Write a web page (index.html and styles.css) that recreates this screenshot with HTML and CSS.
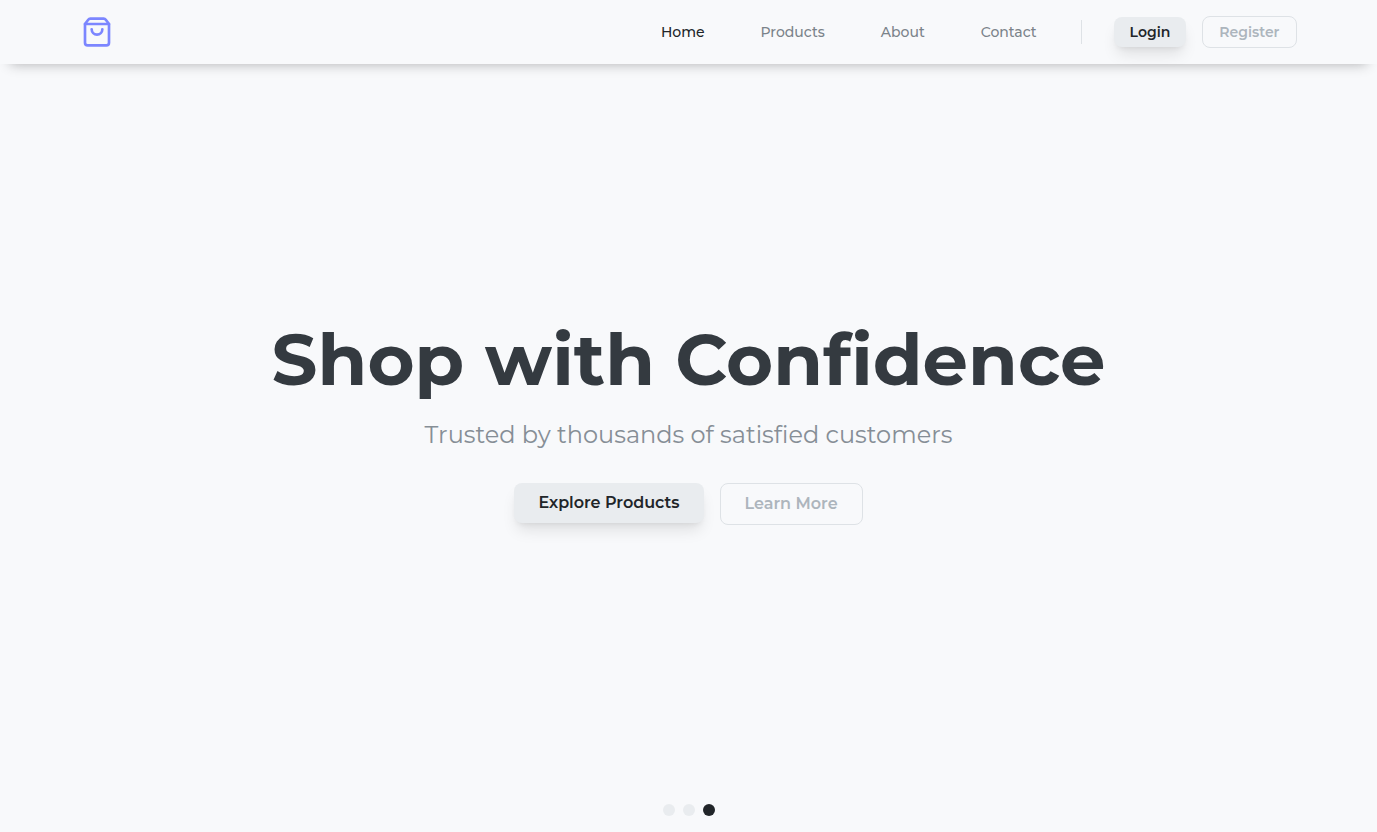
FILE: index.html
```html
<!DOCTYPE html>
<html lang="en">
<head>
  <meta charset="utf-8">
  <meta name="viewport" content="width=device-width, initial-scale=1">
  <title>Shop</title>
  <link rel="stylesheet" href="styles.css">
</head>
<body>
  <header class="header">
    <div class="container">
      <a class="logo" href="#" aria-label="Shop home">
        <svg viewBox="0 0 24 24" width="32" height="32" fill="none" stroke="currentColor" stroke-width="2" stroke-linecap="round" stroke-linejoin="round" aria-hidden="true">
          <path d="M3 6v14a2 2 0 0 0 2 2h14a2 2 0 0 0 2-2V6l-2.4-3.2A2 2 0 0 0 17 2H7a2 2 0 0 0-1.6.8L3 6z"/>
          <path d="M3 6h18"/>
          <path d="M16 10a4 4 0 0 1-8 0"/>
        </svg>
      </a>
      <div class="menu">
        <nav class="links">
          <a class="link link-active" href="#">Home</a>
          <a class="link" href="#">Products</a>
          <a class="link" href="#">About</a>
          <a class="link" href="#">Contact</a>
        </nav>
        <span class="divider"></span>
        <div class="actions">
          <button class="button button-solid button-small" type="button">Login</button>
          <button class="button button-outline button-small" type="button">Register</button>
        </div>
      </div>
    </div>
  </header>
  <main class="hero">
    <section class="slide">
      <h1 class="title">Shop with Confidence</h1>
      <p class="subtitle">Trusted by thousands of satisfied customers</p>
      <div class="actions">
        <button class="button button-solid" type="button">Explore Products</button>
        <button class="button button-outline" type="button">Learn More</button>
      </div>
    </section>
    <div class="dots">
      <button class="dot" type="button" aria-label="Slide 1"></button>
      <button class="dot" type="button" aria-label="Slide 2"></button>
      <button class="dot dot-active" type="button" aria-label="Slide 3"></button>
    </div>
  </main>
</body>
</html>
```
FILE: styles.css
```css
*, *::before, *::after {
  box-sizing: border-box;
}

body {
  display: flex;
  flex-direction: column;
  min-height: 100vh;
  margin: 0;
  background: #f8f9fb;
  color: #212529;
  font-family: Montserrat, Inter, "Open Sans", sans-serif;
}

.header {
  box-shadow: 0 10px 12px -10px rgba(0, 0, 0, 0.3);
}

.container {
  display: flex;
  align-items: center;
  justify-content: space-between;
  max-width: 1280px;
  height: 64px;
  margin: 0 auto;
  padding: 0 32px;
}

.logo {
  display: flex;
  color: #7c86ff;
}

.menu,
.links {
  display: flex;
  align-items: center;
  gap: 32px;
}

.link {
  padding: 8px 12px;
  color: #7b838a;
  font-size: 14px;
  font-weight: 500;
  line-height: 20px;
  text-decoration: none;
}

.link-active {
  color: #212529;
}

.divider {
  width: 1px;
  height: 24px;
  background: #dee2e6;
}

.actions {
  display: flex;
  align-items: flex-start;
  gap: 16px;
}

.header .actions {
  align-items: center;
}

.button {
  padding: 8px 24px;
  border: 0;
  border-radius: 8px;
  font-family: inherit;
  font-size: 16px;
  font-weight: 600;
  line-height: 24px;
  cursor: pointer;
}

.button-small {
  padding: 5px 16px;
  font-size: 14px;
  line-height: 20px;
}

.button-solid {
  background: #e9ecef;
  color: #212529;
  box-shadow: 0 10px 15px -3px rgba(0, 0, 0, 0.1), 0 4px 6px -4px rgba(0, 0, 0, 0.1);
}

.button-outline {
  border: 1px solid #dee2e6;
  background: transparent;
  color: #adb5bd;
}

.hero {
  display: flex;
  flex: 1;
  flex-direction: column;
}

.slide {
  display: flex;
  flex: 1;
  flex-direction: column;
  align-items: center;
  justify-content: center;
  padding: 0 16px;
  text-align: center;
}

.title {
  margin: 0 0 24px;
  color: #343a40;
  font-size: 72px;
  font-weight: 700;
  line-height: 72px;
}

.subtitle {
  margin: 0 0 32px;
  color: #868e96;
  font-size: 24px;
  font-weight: 400;
  line-height: 32px;
}

.dots {
  display: flex;
  justify-content: center;
  gap: 8px;
  padding: 20px 0 16px;
}

.dot {
  width: 12px;
  height: 12px;
  padding: 0;
  border: 0;
  border-radius: 50%;
  background: #e9ecef;
  cursor: pointer;
}

.dot-active {
  background: #212529;
}
```
